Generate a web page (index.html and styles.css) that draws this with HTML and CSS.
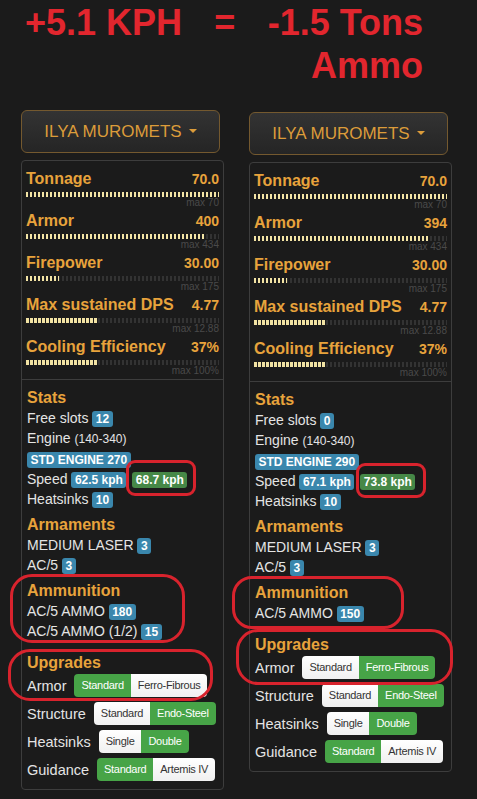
FILE: index.html
```html
<!DOCTYPE html>
<html>
<head>
<meta charset="utf-8">
<link rel="stylesheet" href="styles.css">
</head>
<body>
<h1 class="headline">
  <div class="headline-row"><span>+5.1 KPH</span><span>=</span><span>-1.5 Tons</span></div>
  <div class="headline-end">Ammo</div>
</h1>

<div class="compare">
  <div class="build">
    <div class="mech-btn">ILYA MUROMETS<span class="caret"></span></div>
    <div class="panel">
      <div class="bars">
        <div class="metric">
          <div class="metric-head"><span class="metric-label">Tonnage</span><span class="metric-value">70.0</span></div>
          <div class="bar"><div class="bar-fill" style="width:100%"></div></div>
          <div class="metric-max">max 70</div>
        </div>
        <div class="metric">
          <div class="metric-head"><span class="metric-label">Armor</span><span class="metric-value">400</span></div>
          <div class="bar"><div class="bar-fill" style="width:92.2%"></div></div>
          <div class="metric-max">max 434</div>
        </div>
        <div class="metric">
          <div class="metric-head"><span class="metric-label">Firepower</span><span class="metric-value">30.00</span></div>
          <div class="bar"><div class="bar-fill" style="width:17.1%"></div></div>
          <div class="metric-max">max 175</div>
        </div>
        <div class="metric">
          <div class="metric-head"><span class="metric-label">Max sustained DPS</span><span class="metric-value">4.77</span></div>
          <div class="bar"><div class="bar-fill" style="width:37%"></div></div>
          <div class="metric-max">max 12.88</div>
        </div>
        <div class="metric">
          <div class="metric-head"><span class="metric-label">Cooling Efficiency</span><span class="metric-value">37%</span></div>
          <div class="bar"><div class="bar-fill" style="width:37%"></div></div>
          <div class="metric-max">max 100%</div>
        </div>
      </div>
      <div class="details">
        <div class="group first">
          <div class="section-title">Stats</div>
          <div class="line">Free slots <span class="badge">12</span></div>
          <div class="line">Engine <span class="small">(140-340)</span></div>
          <div class="line"><span class="badge">STD ENGINE 270</span></div>
          <div class="line">Speed <span class="badge">62.5 kph</span> <span class="marked-badge"><span class="badge ok">68.7 kph</span><span class="mark mark-speed-a"></span></span></div>
          <div class="line">Heatsinks <span class="badge">10</span></div>
        </div>
        <div class="group">
          <div class="section-title">Armaments</div>
          <div class="line">MEDIUM LASER <span class="badge">3</span></div>
          <div class="line">AC/5 <span class="badge">3</span></div>
        </div>
        <div class="group marked">
          <div class="section-title">Ammunition</div>
          <div class="line">AC/5 AMMO <span class="badge">180</span></div>
          <div class="line">AC/5 AMMO (1/2) <span class="badge">15</span></div>
          <span class="mark mark-ammo-a"></span>
        </div>
        <div class="upgrades">
          <div class="marked">
            <div class="section-title">Upgrades</div>
            <div class="upgrade-row first">
              <span class="up-label">Armor</span>
              <div class="btn-group"><span class="opt on">Standard</span><span class="opt">Ferro-Fibrous</span></div>
            </div>
            <span class="mark mark-up-a"></span>
          </div>
          <div class="upgrade-row">
            <span class="up-label">Structure</span>
            <div class="btn-group"><span class="opt">Standard</span><span class="opt on">Endo-Steel</span></div>
          </div>
          <div class="upgrade-row">
            <span class="up-label">Heatsinks</span>
            <div class="btn-group"><span class="opt">Single</span><span class="opt on">Double</span></div>
          </div>
          <div class="upgrade-row">
            <span class="up-label">Guidance</span>
            <div class="btn-group"><span class="opt on">Standard</span><span class="opt">Artemis IV</span></div>
          </div>
        </div>
      </div>
    </div>
  </div>

  <div class="build build-alt">
    <div class="mech-btn">ILYA MUROMETS<span class="caret"></span></div>
    <div class="panel">
      <div class="bars">
        <div class="metric">
          <div class="metric-head"><span class="metric-label">Tonnage</span><span class="metric-value">70.0</span></div>
          <div class="bar"><div class="bar-fill" style="width:100%"></div></div>
          <div class="metric-max">max 70</div>
        </div>
        <div class="metric">
          <div class="metric-head"><span class="metric-label">Armor</span><span class="metric-value">394</span></div>
          <div class="bar"><div class="bar-fill" style="width:90.8%"></div></div>
          <div class="metric-max">max 434</div>
        </div>
        <div class="metric">
          <div class="metric-head"><span class="metric-label">Firepower</span><span class="metric-value">30.00</span></div>
          <div class="bar"><div class="bar-fill" style="width:17.1%"></div></div>
          <div class="metric-max">max 175</div>
        </div>
        <div class="metric">
          <div class="metric-head"><span class="metric-label">Max sustained DPS</span><span class="metric-value">4.77</span></div>
          <div class="bar"><div class="bar-fill" style="width:37%"></div></div>
          <div class="metric-max">max 12.88</div>
        </div>
        <div class="metric">
          <div class="metric-head"><span class="metric-label">Cooling Efficiency</span><span class="metric-value">37%</span></div>
          <div class="bar"><div class="bar-fill" style="width:37%"></div></div>
          <div class="metric-max">max 100%</div>
        </div>
      </div>
      <div class="details">
        <div class="group first">
          <div class="section-title">Stats</div>
          <div class="line">Free slots <span class="badge">0</span></div>
          <div class="line">Engine <span class="small">(140-340)</span></div>
          <div class="line"><span class="badge">STD ENGINE 290</span></div>
          <div class="line">Speed <span class="badge">67.1 kph</span> <span class="marked-badge"><span class="badge ok">73.8 kph</span><span class="mark mark-speed-b"></span></span></div>
          <div class="line">Heatsinks <span class="badge">10</span></div>
        </div>
        <div class="group">
          <div class="section-title">Armaments</div>
          <div class="line">MEDIUM LASER <span class="badge">3</span></div>
          <div class="line">AC/5 <span class="badge">3</span></div>
        </div>
        <div class="group marked">
          <div class="section-title">Ammunition</div>
          <div class="line">AC/5 AMMO <span class="badge">150</span></div>
          <span class="mark mark-ammo-b"></span>
        </div>
        <div class="upgrades">
          <div class="marked">
            <div class="section-title">Upgrades</div>
            <div class="upgrade-row first">
              <span class="up-label">Armor</span>
              <div class="btn-group"><span class="opt">Standard</span><span class="opt on">Ferro-Fibrous</span></div>
            </div>
            <span class="mark mark-up-b"></span>
          </div>
          <div class="upgrade-row">
            <span class="up-label">Structure</span>
            <div class="btn-group"><span class="opt">Standard</span><span class="opt on">Endo-Steel</span></div>
          </div>
          <div class="upgrade-row">
            <span class="up-label">Heatsinks</span>
            <div class="btn-group"><span class="opt">Single</span><span class="opt on">Double</span></div>
          </div>
          <div class="upgrade-row">
            <span class="up-label">Guidance</span>
            <div class="btn-group"><span class="opt on">Standard</span><span class="opt">Artemis IV</span></div>
          </div>
        </div>
      </div>
    </div>
  </div>
</div>
</body>
</html>
```

FILE: styles.css
```css
* { box-sizing: border-box; }

body {
  margin: 0;
  background: #1b1b1b;
  font-family: "Liberation Sans", Arial, sans-serif;
  color: #e4e4e4;
}

.headline {
  width: 423px;
  margin: 1px 0 0;
  color: #e2262e;
  font-size: 36px;
  font-weight: bold;
  line-height: 43px;
}

.headline-row {
  display: flex;
  justify-content: space-between;
  padding-left: 25px;
  white-space: nowrap;
}

.headline-end {
  text-align: right;
}

.compare {
  display: flex;
  gap: 25px;
  padding-left: 21px;
  margin-top: 23px;
}

.build {
  width: 203px;
}

.build-alt {
  margin-top: 2px;
}

.mech-btn {
  display: flex;
  align-items: center;
  justify-content: center;
  width: 199px;
  height: 43px;
  margin-bottom: 7px;
  border: 1px solid #74592f;
  border-radius: 6px;
  background: linear-gradient(#333333, #252525);
  color: #dc9c3a;
  font-size: 17px;
}

.caret {
  width: 0;
  height: 0;
  margin-left: 7px;
  margin-top: -2px;
  border-top: 4px solid #dc9c3a;
  border-left: 4px solid transparent;
  border-right: 4px solid transparent;
}

.panel {
  border: 1px solid #3d3d3d;
  border-radius: 4px;
}

.bars {
  padding: 8px 4px 0;
  border-bottom: 1px solid #3d3d3d;
}

.metric {
  height: 40px;
  margin-bottom: 2px;
}

.metric-head {
  display: flex;
  justify-content: space-between;
  align-items: baseline;
  height: 20px;
  line-height: 20px;
  color: #e8a33c;
  font-weight: bold;
}

.metric-label { font-size: 16px; }
.metric-value { font-size: 14px; }

.bar {
  margin-top: 3px;
  height: 5px;
  background: repeating-linear-gradient(90deg, #333333 0 2.5px, transparent 2.5px 4px);
}

.bar-fill {
  height: 100%;
  background: repeating-linear-gradient(90deg, #f2e3a4 0 2.5px, transparent 2.5px 4px);
}

.metric-max {
  font-size: 10px;
  line-height: 12px;
  text-align: right;
  color: #4a4a4a;
}

.details {
  padding: 8px 5px 8px;
}

.group {
  margin-top: 6px;
}

.group.first {
  margin-top: 0;
}

.section-title {
  color: #e8a33c;
  font-weight: bold;
  font-size: 16px;
  line-height: 20px;
}

.line {
  font-size: 14px;
  line-height: 20px;
  white-space: nowrap;
}

.small {
  font-size: 12px;
}

.badge {
  display: inline-block;
  padding: 0 3.5px;
  border-radius: 3px;
  background: #3a87ad;
  color: #ffffff;
  font-size: 12px;
  font-weight: bold;
  line-height: 16px;
}

.badge.ok {
  background: #468847;
}

.marked,
.marked-badge {
  position: relative;
}

.marked-badge {
  display: inline-block;
  margin-left: 2px;
}

.mark {
  position: absolute;
  border: 3px solid #d8232d;
  pointer-events: none;
}

.mark-speed-a { top: -9px; bottom: -7px; left: -6px; right: -9px; border-radius: 9px; }
.mark-speed-b { top: -8px; bottom: -7px; left: -4px; right: -11px; border-radius: 9px; }
.mark-ammo-a { top: -7px; bottom: -2px; left: -17px; right: 33px; border-radius: 22px; }
.mark-ammo-b { top: -7px; bottom: -6px; left: -23px; right: 42px; border-radius: 20px; }
.mark-up-a { top: -4px; bottom: -4px; left: -19px; right: 5px; border-radius: 22px; }
.mark-up-b { top: -6px; bottom: -6px; left: -19px; right: -7px; border-radius: 22px; }

.upgrades {
  margin-top: 12px;
}

.upgrade-row {
  display: flex;
  align-items: center;
  gap: 8px;
  height: 23px;
  margin-top: 5px;
}

.upgrade-row.first {
  margin-top: 1px;
}

.up-label {
  font-size: 14.5px;
}

.btn-group {
  display: flex;
  border-radius: 4px;
  overflow: hidden;
}

.opt {
  padding: 0 7px;
  background: linear-gradient(#ffffff, #f0f0f0);
  color: #333333;
  font-size: 11px;
  letter-spacing: -0.3px;
  line-height: 23px;
}

.opt.on {
  background: #47a447;
  color: #ffffff;
}
```
